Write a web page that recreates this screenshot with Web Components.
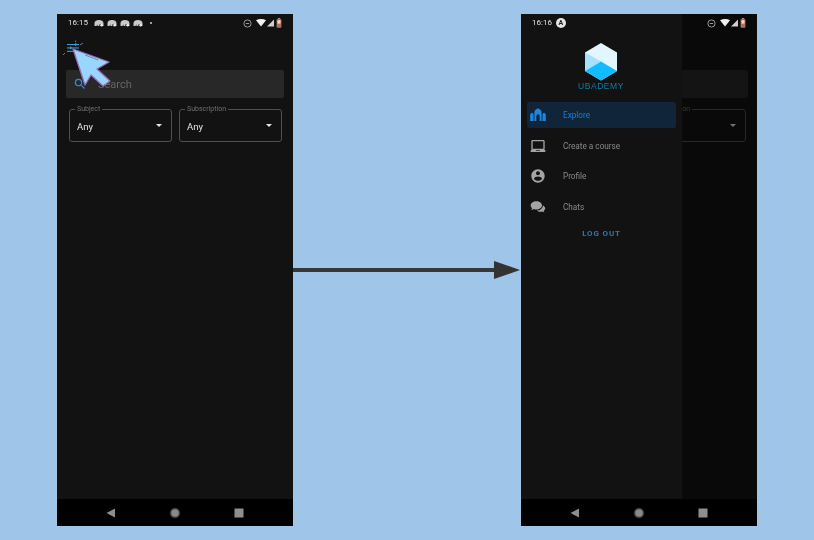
<!DOCTYPE html>
<html>
<head>
<meta charset="utf-8">
<title>Ubademy</title>
<style>
  html, body { margin: 0; height: 100%; background: #9fc5e8; }
  body { font-family: Roboto, "Liberation Sans", sans-serif; overflow: hidden; }
  .stage { display: flex; align-items: center; padding: 14px 57px; height: 512px; }
</style>
</head>
<body>
<div class="stage">
  <phone-frame>
    <status-bar slot="status" time="16:15" variant="bubbles"></status-bar>
    <filter-screen></filter-screen>
    <click-cursor slot="overlay"></click-cursor>
  </phone-frame>
  <flow-arrow></flow-arrow>
  <phone-frame>
    <status-bar slot="status" time="16:16" variant="badge"></status-bar>
    <filter-screen covered></filter-screen>
    <side-drawer slot="overlay">
      <ubademy-logo></ubademy-logo>
      <menu-item icon="explore" active>Explore</menu-item>
      <menu-item icon="laptop">Create a course</menu-item>
      <menu-item icon="profile">Profile</menu-item>
      <menu-item icon="chats">Chats</menu-item>
      <div style="text-align:center;margin-top:8px;font:700 8px/12px Roboto,sans-serif;letter-spacing:.85px;color:#2b7cb3">LOG OUT</div>
    </side-drawer>
  </phone-frame>
</div>

<script>
// Frame del telefono: status arriba, contenido, barra de navegacion abajo
class PhoneFrame extends HTMLElement {
  constructor() {
    super();
    this.attachShadow({ mode: "open" });
    this.shadowRoot.innerHTML = `
      <style>
        :host { display: grid; grid-template-rows: 18px 1fr 27px; position: relative; width: 236px; height: 512px; background: #121212; flex: none; filter: blur(.35px); }
        .main { min-height: 0; }
        .over { position: absolute; inset: 0 0 27px 0; }
        .nav { background: #000; display: flex; align-items: center; justify-content: center; gap: 48px; position: relative; }
        .nav svg { display: block; }
      </style>
      <slot name="status"></slot>
      <div class="main"><slot></slot></div>
      <div class="nav">
        <svg width="16" height="10" viewBox="0 0 16 10"><path d="M3.500 5 12 .5v9z" fill="#8e8e8e"/></svg>
        <svg width="16" height="12" viewBox="0 0 16 12"><circle cx="8" cy="6" r="5.200" fill="#3c3c3c"/><circle cx="8" cy="6" r="3.800" fill="#8a8a8a"/></svg>
        <svg width="16" height="10" viewBox="0 0 16 10"><rect x="3.500" y=".5" width="9" height="9" fill="#8e8e8e"/></svg>
      </div>
      <div class="over"><slot name="overlay"></slot></div>
    `;
  }
}

const BUBBLE = `<svg width="10" height="8" viewBox="0 0 10 8"><path d="M.5 7V4.200C.5 2.200 2.600 1 5 1s4.500 1.200 4.500 3.200V7H7.400L6.900 5.300H5.600L5.200 7H3.600L3.200 5.300 2.600 7z" fill="#c9c9c9"/><circle cx="7.600" cy="6.300" r="1.300" fill="#eee"/></svg>`;

class StatusBar extends HTMLElement {
  constructor() {
    super();
    this.attachShadow({ mode: "open" });
  }
  connectedCallback() {
    const time = this.getAttribute("time") || "";
    const left = this.getAttribute("variant") === "bubbles"
      ? `<span class="icons">${BUBBLE}${BUBBLE}${BUBBLE}${BUBBLE}<i class="dot"></i></span>`
      : `<span class="badge">A</span>`;
    this.shadowRoot.innerHTML = `
      <style>
        :host { display: flex; align-items: center; position: relative; z-index: 2; height: 18px; padding: 0 11px 0 11px; font: 400 8px/18px Roboto, sans-serif; color: #e2e2e2; }
        .icons { display: flex; align-items: center; gap: 3px; margin-left: 6px; }
        .dot { width: 2px; height: 2px; margin-left: 4px; border-radius: 50%; background: #ccc; }
        .badge { width: 10px; height: 10px; margin-left: 4px; border-radius: 50%; background: #e4e4e4; color: #222; font: 700 7px/10px Roboto, sans-serif; text-align: center; }
        .right { margin-left: auto; display: flex; align-items: center; gap: 1px; }
        svg { display: block; }
      </style>
      <span>${time}</span>${left}
      <span class="right">
        <svg width="9" height="9" viewBox="0 0 9 9" style="margin-right:3px"><circle cx="4.500" cy="4.500" r="3.600" fill="none" stroke="#9a9a9a" stroke-width="1"/><path d="M2.800 4.500h3.400" stroke="#9a9a9a"/></svg>
        <svg width="10" height="8" viewBox="0 0 10 8"><path d="M0 1.200C3 -.3 7 -.3 10 1.200L5 7.600z" fill="#f2f2f2"/></svg>
        <svg width="7" height="8" viewBox="0 0 7 8"><path d="M7 .5V7.500H0z" fill="#cfcfcf"/></svg>
        <svg width="6" height="10" viewBox="0 0 6 10" style="margin-left:1px"><rect x="1.800" y="0" width="2.400" height="1.500" fill="#b88f82"/><rect x=".6" y="1.200" width="4.800" height="8.500" rx=".6" fill="#b5705c"/><rect x="1.500" y="2.200" width="3" height="3.400" fill="#e8d8d0"/></svg>
      </span>
    `;
  }
}

// Pantalla de filtros: icono, buscador y los dos selects
class FilterScreen extends HTMLElement {
  constructor() {
    super();
    this.attachShadow({ mode: "open" });
  }
  connectedCallback() {
    // Cubierta por el drawer: el placeholder queda debajo y no se dibuja
    const covered = this.hasAttribute("covered") ? "covered" : "";
    this.shadowRoot.innerHTML = `
      <style>
        :host { display: block; padding: 0 9px; }
        .top { height: 38px; display: flex; align-items: flex-start; padding-top: 11px; box-sizing: border-box; }
        .row { display: flex; gap: 7px; margin: 11px 2px 0 3px; }
        svg { display: block; margin-left: 1px; }
      </style>
      <div class="top">
        <svg width="13" height="10" viewBox="0 0 13 10" fill="#3f9ad6"><rect x="0" y="1" width="12" height="1.100"/><rect x="0" y="4.400" width="12" height="1.100"/><rect x="0" y="7.800" width="12" height="1.100"/><rect x="8" y=".2" width="1.400" height="2.600"/><rect x="3" y="3.600" width="1.400" height="2.600"/><rect x="7" y="7" width="1.400" height="2.600"/></svg>
      </div>
      <search-box ${covered}></search-box>
      <div class="row">
        <select-field label="Subject">Any</select-field>
        <select-field label="Subscription">Any</select-field>
      </div>
    `;
  }
}

class SearchBox extends HTMLElement {
  constructor() {
    super();
    this.attachShadow({ mode: "open" });
    this.shadowRoot.innerHTML = `
      <style>
        :host { display: flex; align-items: center; height: 28px; background: #282828; border-radius: 2px; padding-left: 7px; font: 400 11px Roboto, sans-serif; color: #666; }
        :host([covered]) span { visibility: hidden; }
        svg { margin-right: 11px; display: block; }
      </style>
      <svg width="14" height="14" viewBox="0 0 24 24"><path fill="#2f8fd0" d="M15.500 14h-.79l-.28-.27A6.471 6.471 0 0 0 16 9.500 6.500 6.500 0 1 0 9.500 16c1.610 0 3.090-.59 4.230-1.570l.27.28v.79l5 4.990L20.490 19l-4.990-5zm-6 0C7.010 14 5 11.990 5 9.500S7.010 5 9.500 5 14 7.010 14 9.500 11.990 14 9.500 14z"/></svg>
      <span>Search</span>
    `;
  }
}

class SelectField extends HTMLElement {
  constructor() {
    super();
    this.attachShadow({ mode: "open" });
  }
  connectedCallback() {
    const label = this.getAttribute("label") || "";
    this.shadowRoot.innerHTML = `
      <style>
        :host { display: flex; flex: 1; align-items: center; justify-content: space-between; position: relative; height: 33px; box-sizing: border-box; border: 1px solid #505050; border-radius: 3px; padding: 2px 9px 0 7px; font: 400 9.500px Roboto, sans-serif; color: #e4e4e4; }
        .label { position: absolute; top: -5px; left: 5px; padding: 0 2px; background: #121212; font-size: 7px; line-height: 9px; color: #707070; }
        .caret { width: 0; height: 0; border-left: 3.500px solid transparent; border-right: 3.500px solid transparent; border-top: 3.500px solid #e6e6e6; margin-top: -3px; }
      </style>
      <span class="label">${label}</span>
      <span><slot></slot></span>
      <span class="caret"></span>
    `;
  }
}

class ClickCursor extends HTMLElement {
  constructor() {
    super();
    this.attachShadow({ mode: "open" });
    this.shadowRoot.innerHTML = `
      <style>
        :host { display: block; position: absolute; left: 5px; top: 26px; width: 60px; height: 50px; pointer-events: none; }
        svg { display: block; overflow: visible; }
      </style>
      <svg width="60" height="50" viewBox="0 0 60 50">
        <g stroke="#8f62a8" stroke-width="1" fill="none"><path d="M18 5l3-2M3 13l-2 2M13 2l1-1.500"/></g>
        <path d="M11 9 47 22 35 29 48 41 41 46 29 35 23 45z" fill="#99d6ff" stroke="#9a6cb4" stroke-width="1.300" stroke-linejoin="round"/>
        <path d="M23 15 36 20" stroke="#5f8fb8" stroke-width="1"/>
      </svg>
    `;
  }
}

class FlowArrow extends HTMLElement {
  constructor() {
    super();
    this.attachShadow({ mode: "open" });
    this.shadowRoot.innerHTML = `
      <style>
        :host { display: block; width: 228px; height: 18px; flex: none; }
        svg { display: block; }
      </style>
      <svg width="228" height="18" viewBox="0 0 228 18"><rect x="0" y="7" width="202" height="4" fill="#373737"/><path d="M201 0 227 9 201 18z" fill="#333"/></svg>
    `;
  }
}

// Drawer lateral con el scrim oscuro a la derecha
class SideDrawer extends HTMLElement {
  constructor() {
    super();
    this.attachShadow({ mode: "open" });
    this.shadowRoot.innerHTML = `
      <style>
        :host { display: flex; position: absolute; inset: 0; background: rgba(0,0,0,.5); }
        .panel { width: 161px; height: 100%; box-sizing: border-box; background: #121212; padding: 29px 6px 0 6px; }
      </style>
      <div class="panel"><slot></slot></div>
    `;
  }
}

class UbademyLogo extends HTMLElement {
  constructor() {
    super();
    this.attachShadow({ mode: "open" });
    this.shadowRoot.innerHTML = `
      <style>
        :host { display: flex; flex-direction: column; align-items: center; margin-bottom: 11px; margin-right: 1px; font: 400 8.500px/10px "Liberation Sans", sans-serif; letter-spacing: .55px; color: #0f7ea8; }
        svg { display: block; }
      </style>
      <svg width="34" height="38" viewBox="0 0 34 38">
        <path d="M17 0 33 9.500V28L17 37.500 1 28V9.500z" fill="#e2f6ff"/>
        <path d="M1 9.500 17 18.500 1 28z" fill="#a6e1ff"/>
        <path d="M1 28 17 18.500 33 28 17 37.500z" fill="#11bcff"/>
      </svg>
      <span>UBADEMY</span>
    `;
  }
}

const MENU_ICONS = {
  explore: `<path fill-rule="evenodd" d="M6.600 21V8C6.600 5 9.500 3 12 2 14.500 3 17.400 5 17.400 8V21H14.500V13.500a2.500 2.500 0 0 0-5 0V21zM.3 21V11.500C.3 10 2 9 3 8.500 4 9 5.300 10 5.300 11.500V21zM18.700 21V11.500C18.700 10 20 9 21 8.500 22 9 23.700 10 23.700 11.500V21z"/>`,
  laptop: `<path d="M20 3H4C2.900 3 2 3.900 2 5v11.500c0 .8.700 1.500 1.500 1.500H1v3h22v-3h-2.500c.8 0 1.500-.7 1.500-1.500V5c0-1.100-.9-2-2-2zM4 5h16v11H4V5z"/><path d="M9 18h6v1H9z" fill="#121212"/>`,
  profile: `<path d="M12 2C6.480 2 2 6.480 2 12s4.480 10 10 10 10-4.480 10-10S17.520 2 12 2zm0 3c1.660 0 3 1.340 3 3s-1.340 3-3 3-3-1.340-3-3 1.340-3 3-3zm0 14.200c-2.500 0-4.710-1.280-6-3.220.030-1.990 4-3.080 6-3.080 1.990 0 5.970 1.090 6 3.080-1.290 1.940-3.500 3.220-6 3.220z"/>`,
  chats: `<path d="M9.500 3.500C4.800 3.500 1 6.300 1 9.700c0 1.500.8 2.900 2.100 4-.3 1-1 1.800-1.900 2.500 1.700 0 3.200-.5 4.400-1.300 1.200.5 2.500.8 3.900.8 4.700 0 8.500-2.700 8.500-6S14.200 3.500 9.500 3.500z"/><path d="M19.200 9.200c.1.300.1.500.1.800 0 3.800-4 7-9.100 7.300 1.300 1.200 3.300 2 5.500 2 .9 0 1.800-.1 2.600-.4 1 .7 2.200 1.100 3.600 1.100-.7-.6-1.200-1.300-1.500-2.100 1.500-1 2.400-2.400 2.400-3.900 0-1.900-1.400-3.600-3.600-4.800z"/>`
};

class MenuItem extends HTMLElement {
  constructor() {
    super();
    this.attachShadow({ mode: "open" });
  }
  connectedCallback() {
    const icon = MENU_ICONS[this.getAttribute("icon")] || "";
    this.shadowRoot.innerHTML = `
      <style>
        :host { display: flex; align-items: center; height: 26px; margin-bottom: 4.700px; border-radius: 2px; padding-left: 3px; font: 400 8.200px Roboto, sans-serif; color: #8a8a8a; fill: #a4a4a4; }
        :host([active]) { background: #10243a; color: #1a7fd8; fill: #1f86e0; }
        svg { display: block; margin-right: 17px; }
      </style>
      <svg width="16" height="16" viewBox="0 0 24 24">${icon}</svg>
      <span><slot></slot></span>
    `;
  }
}

customElements.define("phone-frame", PhoneFrame);
customElements.define("status-bar", StatusBar);
customElements.define("filter-screen", FilterScreen);
customElements.define("search-box", SearchBox);
customElements.define("select-field", SelectField);
customElements.define("click-cursor", ClickCursor);
customElements.define("flow-arrow", FlowArrow);
customElements.define("side-drawer", SideDrawer);
customElements.define("ubademy-logo", UbademyLogo);
customElements.define("menu-item", MenuItem);
</script>
</body>
</html>
